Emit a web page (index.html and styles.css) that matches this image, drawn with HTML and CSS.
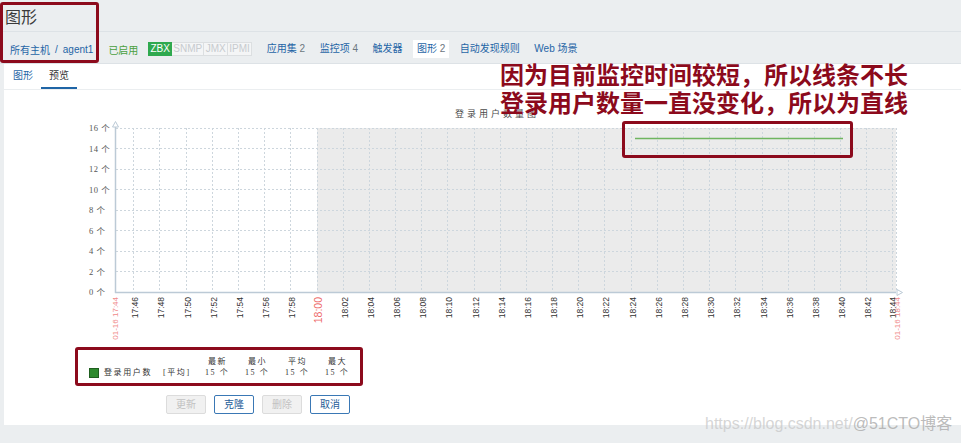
FILE: index.html
```html
<!DOCTYPE html>
<html lang="zh-CN">
<head>
<meta charset="utf-8">
<title>图形</title>
<link rel="stylesheet" href="styles.css">
</head>
<body>
<header class="page-head">
  <h1 class="title">图形</h1>
</header>
<nav class="host-nav">
  <div class="crumbs"><a class="link">所有主机</a><span class="sep">/</span><a class="link">agent1</a></div>
  <span class="status">已启用</span>
  <span class="badges"><span class="badge on">ZBX</span><span class="badge">SNMP</span><span class="badge">JMX</span><span class="badge">IPMI</span></span>
  <ul class="items">
    <li class="item">应用集 <span class="num">2</span></li>
    <li class="item">监控项 <span class="num">4</span></li>
    <li class="item">触发器</li>
    <li class="item current">图形 <span class="num">2</span></li>
    <li class="item">自动发现规则</li>
    <li class="item">Web 场景</li>
  </ul>
</nav>
<main class="panel">
  <div class="tabs">
    <span class="tab link-tab">图形</span>
    <span class="tab active">预览</span>
  </div>
  <svg class="chart" width="952" height="255" viewBox="0 0 952 255" xmlns="http://www.w3.org/2000/svg">
    <g transform="translate(-4,-90)">
      <text class="ch-title" x="497" y="117" text-anchor="middle">登录用户数量图</text>
      <rect x="317" y="128" width="579" height="164" fill="#ebebeb"/>
      <g class="hgrid" stroke="#cdd6dd" stroke-dasharray="2 2" stroke-width="1">
        <line x1="116" y1="128.5" x2="896" y2="128.5"/>
        <line x1="116" y1="148.5" x2="896" y2="148.5"/>
        <line x1="116" y1="169.5" x2="896" y2="169.5"/>
        <line x1="116" y1="189.5" x2="896" y2="189.5"/>
        <line x1="116" y1="210.5" x2="896" y2="210.5"/>
        <line x1="116" y1="230.5" x2="896" y2="230.5"/>
        <line x1="116" y1="251.5" x2="896" y2="251.5"/>
        <line x1="116" y1="271.5" x2="896" y2="271.5"/>
      </g>
      <g class="vgrid" stroke="#cdd6dd" stroke-dasharray="2 2" stroke-width="1">
        <line x1="133.5" y1="128" x2="133.5" y2="292"/>
        <line x1="159.5" y1="128" x2="159.5" y2="292"/>
        <line x1="186.5" y1="128" x2="186.5" y2="292"/>
        <line x1="212.5" y1="128" x2="212.5" y2="292"/>
        <line x1="238.5" y1="128" x2="238.5" y2="292"/>
        <line x1="264.5" y1="128" x2="264.5" y2="292"/>
        <line x1="290.5" y1="128" x2="290.5" y2="292"/>
        <line x1="317.5" y1="128" x2="317.5" y2="292"/>
        <line x1="343.5" y1="128" x2="343.5" y2="292"/>
        <line x1="369.5" y1="128" x2="369.5" y2="292"/>
        <line x1="395.5" y1="128" x2="395.5" y2="292"/>
        <line x1="421.5" y1="128" x2="421.5" y2="292"/>
        <line x1="447.5" y1="128" x2="447.5" y2="292"/>
        <line x1="474.5" y1="128" x2="474.5" y2="292"/>
        <line x1="500.5" y1="128" x2="500.5" y2="292"/>
        <line x1="526.5" y1="128" x2="526.5" y2="292"/>
        <line x1="552.5" y1="128" x2="552.5" y2="292"/>
        <line x1="578.5" y1="128" x2="578.5" y2="292"/>
        <line x1="604.5" y1="128" x2="604.5" y2="292"/>
        <line x1="631.5" y1="128" x2="631.5" y2="292"/>
        <line x1="657.5" y1="128" x2="657.5" y2="292"/>
        <line x1="683.5" y1="128" x2="683.5" y2="292"/>
        <line x1="709.5" y1="128" x2="709.5" y2="292"/>
        <line x1="735.5" y1="128" x2="735.5" y2="292"/>
        <line x1="762.5" y1="128" x2="762.5" y2="292"/>
        <line x1="788.5" y1="128" x2="788.5" y2="292"/>
        <line x1="814.5" y1="128" x2="814.5" y2="292"/>
        <line x1="840.5" y1="128" x2="840.5" y2="292"/>
        <line x1="866.5" y1="128" x2="866.5" y2="292"/>
        <line x1="892.5" y1="128" x2="892.5" y2="292"/>
        <line x1="896.5" y1="128" x2="896.5" y2="292"/>
      </g>
      <line x1="635" y1="138.5" x2="843" y2="138.5" stroke="#6fb560" stroke-width="1.5"/>
      <g stroke="#bccad6" stroke-width="1.5" fill="#fff">
        <line x1="115.5" y1="127" x2="115.5" y2="293"/>
        <line x1="115" y1="292.5" x2="896" y2="292.5"/>
        <polygon points="112.5,127 118.5,127 115.5,121.5" stroke-width="1"/>
        <polygon points="897,289.5 897,295.5 902.5,292.5" stroke-width="1"/>
      </g>
      <g class="ylab">
        <text x="89" y="131">16 个</text>
        <text x="89" y="151.5">14 个</text>
        <text x="89" y="172">12 个</text>
        <text x="89" y="192.5">10 个</text>
        <text x="89" y="213">8 个</text>
        <text x="89" y="233.5">6 个</text>
        <text x="89" y="254">4 个</text>
        <text x="89" y="274.5">2 个</text>
        <text x="89" y="295">0 个</text>
      </g>
      <g class="xlab" text-anchor="end">
        <text transform="translate(138,297) rotate(-90)">17:46</text>
        <text transform="translate(164,297) rotate(-90)">17:48</text>
        <text transform="translate(191,297) rotate(-90)">17:50</text>
        <text transform="translate(217,297) rotate(-90)">17:52</text>
        <text transform="translate(243,297) rotate(-90)">17:54</text>
        <text transform="translate(269,297) rotate(-90)">17:56</text>
        <text transform="translate(295,297) rotate(-90)">17:58</text>
        <text transform="translate(348,297) rotate(-90)">18:02</text>
        <text transform="translate(374,297) rotate(-90)">18:04</text>
        <text transform="translate(400,297) rotate(-90)">18:06</text>
        <text transform="translate(426,297) rotate(-90)">18:08</text>
        <text transform="translate(452,297) rotate(-90)">18:10</text>
        <text transform="translate(479,297) rotate(-90)">18:12</text>
        <text transform="translate(505,297) rotate(-90)">18:14</text>
        <text transform="translate(531,297) rotate(-90)">18:16</text>
        <text transform="translate(557,297) rotate(-90)">18:18</text>
        <text transform="translate(583,297) rotate(-90)">18:20</text>
        <text transform="translate(609,297) rotate(-90)">18:22</text>
        <text transform="translate(636,297) rotate(-90)">18:24</text>
        <text transform="translate(662,297) rotate(-90)">18:26</text>
        <text transform="translate(688,297) rotate(-90)">18:28</text>
        <text transform="translate(714,297) rotate(-90)">18:30</text>
        <text transform="translate(740,297) rotate(-90)">18:32</text>
        <text transform="translate(767,297) rotate(-90)">18:34</text>
        <text transform="translate(793,297) rotate(-90)">18:36</text>
        <text transform="translate(819,297) rotate(-90)">18:38</text>
        <text transform="translate(845,297) rotate(-90)">18:40</text>
        <text transform="translate(871,297) rotate(-90)">18:42</text>
        <text transform="translate(895.5,297) rotate(-90)">18:44</text>
        <text class="red big" transform="translate(322,297) rotate(-90)">18:00</text>
        <text class="red" transform="translate(117.5,297) rotate(-90)">01-16 17:44</text>
        <text class="red" transform="translate(899.5,297) rotate(-90)">01-16 18:44</text>
      </g>
    </g>
  </svg>
  <div class="legend">
    <span class="lg-head c4">最新</span>
    <span class="lg-head c5">最小</span>
    <span class="lg-head c6">平均</span>
    <span class="lg-head c7">最大</span>
    <span class="swatch"></span>
    <span class="lg-name">登录用户数</span>
    <span class="lg-func">[平均]</span>
    <span class="lg-val">15 个</span>
    <span class="lg-val">15 个</span>
    <span class="lg-val">15 个</span>
    <span class="lg-val">15 个</span>
  </div>
  <div class="buttons">
    <button class="btn disabled">更新</button>
    <button class="btn">克隆</button>
    <button class="btn disabled">删除</button>
    <button class="btn">取消</button>
  </div>
</main>
<div class="note">因为目前监控时间较短，所以线条不长<br>登录用户数量一直没变化，所以为直线</div>
<div class="mark mark-head"></div>
<div class="mark mark-line"></div>
<div class="watermark"><span class="wm-url">https://blog.csdn.net/</span><span class="wm-brand">@51CTO博客</span></div>
</body>
</html>
```
FILE: styles.css
```css
* { box-sizing: border-box; }

html, body {
  margin: 0;
  padding: 0;
}

body {
  position: relative;
  width: 961px;
  height: 443px;
  overflow: hidden;
  background: #ebeef0;
  font-family: "Liberation Sans", Arial, "Noto Sans CJK SC", sans-serif;
  font-size: 10px;
  color: #333;
  -webkit-font-smoothing: antialiased;
}

.page-head {
  height: 32px;
  padding: 6px 0 0 5px;
  border-bottom: 1px solid #dde2e6;
}

.title {
  margin: 0;
  font-size: 16px;
  font-weight: normal;
  line-height: 24px;
  color: #3a3a3a;
}

.host-nav {
  display: flex;
  align-items: center;
  height: 32px;
  padding: 3px 0 0 10px;
  border-bottom: 1px solid #dde2e6;
}

.crumbs {
  display: flex;
  align-items: center;
}

.link { color: #1f65a6; }

.sep {
  margin: 0 5px;
  color: #1f65a6;
}

.status {
  margin-left: 15px;
  color: #4a9f3e;
}

.badges {
  display: flex;
  margin-left: 10px;
}

.badge {
  display: inline-block;
  height: 14px;
  line-height: 12px;
  padding: 0 1px 0 1.5px;
  border: 1px solid #dcdfe1;
  border-left-width: 0;
  background: #f4f5f6;
  color: #c7cbcf;
}

.badge.on {
  background: #2fa94f;
  border-color: #2fa94f;
  border-left-width: 1px;
  color: #fff;
  padding: 0 1px;
}

.items {
  display: flex;
  gap: 6.5px;
  list-style: none;
  margin: 0 0 0 11px;
  padding: 0;
}

.item {
  padding: 0 4px;
  height: 18px;
  line-height: 18px;
  color: #1f65a6;
}

.item .num { color: #6c7780; }

.item.current { background: #fff; }

.panel {
  margin-left: 4px;
  height: 361px;
  background: #fff;
}

.tabs {
  display: flex;
  height: 26px;
  padding-left: 1px;
  border-bottom: 1px solid #ebeef0;
}

.tab {
  padding: 0 8px;
  height: 25px;
  line-height: 23px;
  border-bottom: 2px solid transparent;
  color: #333;
}

.tab.link-tab { color: #1f65a6; }

.tab.active { border-bottom-color: #1f65a6; }

.chart { display: block; }

.ch-title {
  font-family: "Noto Sans CJK SC", serif;
  font-size: 9px;
  letter-spacing: 3px;
  fill: #4a4a4a;
}

.ylab text {
  font-family: "Liberation Serif", "Noto Sans CJK SC", serif;
  font-size: 8.5px;
  letter-spacing: 0.5px;
  fill: #555;
}

.xlab text {
  font-family: "Liberation Sans", sans-serif;
  font-size: 8.5px;
  fill: #333;
}

.xlab text.red {
  fill: #f08a8a;
  font-size: 8px;
}

.xlab text.red.big {
  fill: #ee6b6b;
  font-size: 10.5px;
}

.legend {
  display: grid;
  grid-template-columns: 10px 64px 42px 40px 40px 40px 30px;
  grid-template-rows: 11px 11px;
  column-gap: 0;
  width: 288px;
  height: 39px;
  margin: 2px 0 0 71px;
  padding: 6px 0 5px 11px;
  border: 3px solid #8c0a1c;
  border-radius: 3px;
  font-family: "Liberation Serif", "Noto Sans CJK SC", serif;
  font-size: 8px;
  letter-spacing: 1.6px;
  line-height: 11px;
  color: #333;
  white-space: nowrap;
}

.lg-head { grid-row: 1; padding-left: 3px; }
.c4 { grid-column: 4; }
.c5 { grid-column: 5; }
.c6 { grid-column: 6; }
.c7 { grid-column: 7; }

.swatch {
  grid-row: 2;
  grid-column: 1;
  align-self: center;
  width: 10px;
  height: 10px;
  background: #2e8a2e;
  border: 1px solid #1f5f1f;
}

.lg-name { grid-row: 2; grid-column: 2; padding-left: 5px; }
.lg-func { grid-row: 2; grid-column: 3; }
.lg-val { grid-row: 2; }

.buttons {
  display: flex;
  gap: 8px;
  margin: 9px 0 0 162px;
}

.btn {
  width: 40px;
  height: 19px;
  padding: 0;
  font-family: "Liberation Sans", "Noto Sans CJK SC", sans-serif;
  font-size: 10px;
  line-height: 17px;
  background: #fff;
  border: 1px solid #3a78b5;
  border-radius: 2px;
  color: #1f5d99;
}

.btn.disabled {
  background: #f1f1f1;
  border-color: #dcdcdc;
  color: #c2c2c2;
}

.note {
  position: absolute;
  left: 500px;
  top: 60px;
  font-family: "Noto Sans CJK SC", sans-serif;
  font-size: 24px;
  font-weight: 700;
  line-height: 28px;
  color: #8c0a1c;
  white-space: nowrap;
  text-shadow: 0 0 1px #fff;
}

.mark {
  position: absolute;
  border: 3px solid #8c0a1c;
  border-radius: 3px;
}

.mark-head {
  left: 0;
  top: 2px;
  width: 99px;
  height: 61px;
}

.mark-line {
  left: 622px;
  top: 121px;
  width: 231px;
  height: 37px;
}

.watermark {
  position: absolute;
  left: 705px;
  top: 415px;
  font-family: "Liberation Sans", Arial, "Noto Sans CJK SC", sans-serif;
  font-size: 16px;
  line-height: 18px;
  white-space: nowrap;
}

.wm-url { color: rgba(200, 200, 200, 0.75); }
.wm-brand { color: rgba(170, 170, 170, 0.8); }
```
